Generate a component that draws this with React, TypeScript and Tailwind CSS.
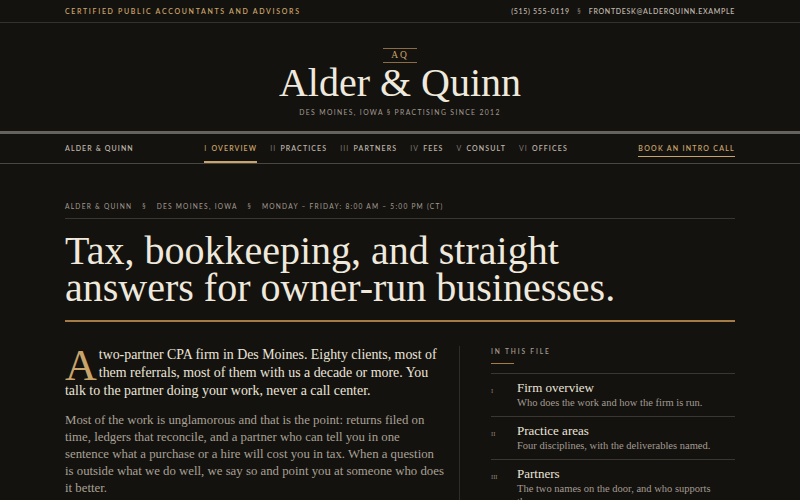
import React from "react";

const serif = { fontFamily: '"Liberation Serif", "DejaVu Serif", serif' };
const sans = { fontFamily: 'Lato, "Noto Sans", sans-serif' };

const navLinks = [
  ["I", "OVERVIEW"],
  ["II", "PRACTICES"],
  ["III", "PARTNERS"],
  ["IV", "FEES"],
  ["V", "CONSULT"],
  ["VI", "OFFICES"],
];

const toc = [
  ["I", "Firm overview", "Who does the work and how the firm is run."],
  ["II", "Practice areas", "Four disciplines, with the deliverables named."],
  ["III", "Partners", "The two names on the door, and who supports them."],
];

export default function App() {
  return (
    <div className="min-h-[500px] w-full bg-[#14120f] text-[#ebe5d9] overflow-hidden">
      {/* top bar */}
      <div className="border-b border-[#35322e]">
        <div className="mx-auto flex h-[22px] w-[670px] items-center justify-between text-[7px] font-semibold tracking-[0.24em]" style={sans}>
          <span className="text-[#c9a46a]">CERTIFIED PUBLIC ACCOUNTANTS AND ADVISORS</span>
          <span className="text-[#bdb6aa] tracking-[0.1em]">
            (515) 555-0119 <span className="mx-[5px] text-[#7d776e]">§</span> FRONTDESK@ALDERQUINN.EXAMPLE
          </span>
        </div>
      </div>

      {/* masthead */}
      <div className="flex h-[111px] flex-col items-center border-b-[3px] border-[#66635e] pt-[25px]">
        <div className="border-y border-[#8a6d45] px-[8px] text-[9.5px] leading-[13px] tracking-[0.2em] text-[#c9a46a]" style={serif}>
          AQ
        </div>
        <div className="mt-[1px] text-[40px] leading-[38px] text-[#efe9dd]" style={serif}>
          Alder &amp; Quinn
        </div>
        <div className="mt-[5px] text-[6.8px] tracking-[0.2em] text-[#a39c91]" style={sans}>
          DES MOINES, IOWA § PRACTISING SINCE 2012
        </div>
      </div>

      {/* nav */}
      <div className="border-b border-[#4a4743]">
        <div className="mx-auto flex h-[29px] w-[670px] items-stretch justify-between text-[7px] font-semibold tracking-[0.16em]" style={sans}>
          <div className="flex items-center text-[#bdb6aa]">ALDER &amp; QUINN</div>
          <div className="flex items-stretch gap-[13px]">
            {navLinks.map(([n, l], i) => (
              <div
                key={l}
                className={
                  "flex items-center border-b-2 pt-[2px] " +
                  (i === 0 ? "border-[#c9a46a] text-[#c9a46a]" : "border-transparent text-[#bdb6aa]")
                }
              >
                <span className={i === 0 ? "text-[#c9a46a] font-normal" : "text-[#7f796f] font-normal"}>{n}</span>
                <span className="ml-[4px]">{l}</span>
              </div>
            ))}
          </div>
          <div className="flex items-center">
            <span className="border-b border-[#c9a46a] pb-[3px] pt-[3px] tracking-[0.18em] text-[#c9a46a]">BOOK AN INTRO CALL</span>
          </div>
        </div>
      </div>

      {/* main */}
      <div className="mx-auto w-[670px]">
        <div className="mt-[38px] border-b border-[#3a3733] pb-[6px] text-[6.6px] tracking-[0.19em] text-[#a39c91]" style={sans}>
          ALDER &amp; QUINN <span className="mx-[7px]">§</span> DES MOINES, IOWA <span className="mx-[7px]">§</span> MONDAY – FRIDAY: 8:00 AM – 5:00 PM (CT)
        </div>

        <h1 className="mt-[13px] text-[40px] leading-[37px] text-[#efe9dd]" style={serif}>
          Tax, bookkeeping, and straight
          <br />
          answers for owner-run businesses.
        </h1>
        <div className="mt-[14px] h-[2px] bg-[#a57c45]" />

        <div className="mt-[24px] flex">
          <div className="w-[394px] pr-[14px]" style={serif}>
            <p className="text-[13.9px] leading-[18px] text-[#ebe5d9]">
              <span className="float-left mr-[2px] mt-[3px] text-[44px] leading-[33px] text-[#c9a46a]">A</span>
              two-partner CPA firm in Des Moines. Eighty clients, most of them referrals, most of them with us a decade or more. You talk to the partner doing your work, never a call center.
            </p>
            <p className="mt-[12px] text-[12.8px] leading-[17px] text-[#a8a195]">
              Most of the work is unglamorous and that is the point: returns filed on time, ledgers that reconcile, and a partner who can tell you in one sentence what a purchase or a hire will cost you in tax. When a question is outside what we do well, we say so and point you at someone who does it better.
            </p>
          </div>
          <div className="flex-1 border-l border-[#2f2c29] pl-[31px]">
            <div className="mt-[1px] text-[6.6px] font-semibold tracking-[0.28em] text-[#a39c91]" style={sans}>
              IN THIS FILE
            </div>
            <div className="mt-[6px] h-px w-[23px] bg-[#a57c45]" />
            <div className="mt-[9px]">
              {toc.map(([n, t, d]) => (
                <div key={n} className="flex border-t border-[#3a3733] pb-[7px] pt-[5px]" style={serif}>
                  <div className="w-[26px] pt-[7px] text-[6.5px] text-[#8a847a]">{n}</div>
                  <div className="flex-1">
                    <div className="text-[13px] leading-[17px] text-[#ebe5d9]">{t}</div>
                    <div className="max-w-[199px] text-[10.5px] leading-[13px] text-[#a39c91]">{d}</div>
                  </div>
                </div>
              ))}
            </div>
          </div>
        </div>
      </div>
    </div>
  );
}
